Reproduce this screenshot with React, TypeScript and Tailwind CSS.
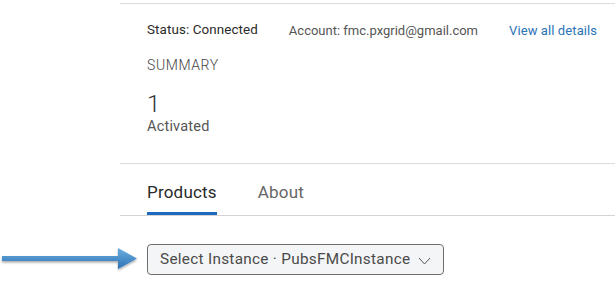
import React from "react";

export default function App() {
  return (
    <div className="relative h-[283px] w-[615px] overflow-hidden bg-white font-['Roboto',sans-serif]">
      {/* pointer arrow */}
      <svg className="absolute left-0 top-[245px]" width="140" height="30" viewBox="0 0 140 30">
        <defs>
          <linearGradient id="ar" x1="0" y1="0" x2="0" y2="1">
            <stop offset="0" stopColor="#6aaee0" />
            <stop offset="1" stopColor="#2f74b5" />
          </linearGradient>
          <filter id="sh" x="-10%" y="-50%" width="120%" height="200%">
            <feDropShadow dx="0" dy="1.5" stdDeviation="1.2" floodColor="#000" floodOpacity="0.35" />
          </filter>
        </defs>
        <g filter="url(#sh)">
          <path d="M2 11 H118 V3 L137 13.5 L118 24 V16 H2 Z" fill="url(#ar)" />
        </g>
      </svg>

      <div className="ml-[120px] mt-[3px] border-t border-[#dcdcdc]">
        <div className="pl-[27px]">
          <div className="flex h-[52px] items-center pt-[1px] text-[13px]">
            <span className="text-[13.4px] tracking-[0.1px] text-[#2a2a2a]">Status: Connected</span>
            <span className="ml-[31px] text-[#555]">Account: fmc.pxgrid@gmail.com</span>
            <span className="ml-[31px] tracking-[0.1px] text-[#2b73b8]">View all details</span>
          </div>
          <div className="text-[14px] font-light leading-[18px] tracking-[0.6px] text-[#444]">SUMMARY</div>
          <div className="mt-[17px] text-[24px] font-light leading-[26px] text-[#333]">1</div>
          <div className="mt-[1px] text-[14.5px] leading-[18px] tracking-[0.2px] text-[#555]">Activated</div>
        </div>

        <div className="mt-[27px] border-t border-[#dcdcdc]">
          <div className="flex items-end border-b border-[#d4d4d4] pl-[27px] pt-[18px]">
            <div className="border-b-[3px] border-[#1d69c0] pb-[10px] text-[17px] leading-[20px] tracking-[0.2px] text-[#2a2a2a]">Products</div>
            <div className="ml-[41px] pb-[13px] text-[17px] leading-[20px] tracking-[0.2px] text-[#666]">About</div>
          </div>
          <div className="pl-[27px] pt-[28px]">
            <button className="flex h-[31px] w-[297px] items-center rounded-[4px] border border-[#6e6e6e] bg-[#f4f5f6] pl-[12px] text-[15.3px] tracking-[0.3px] text-[#4a4a4a]">
              <span>Select Instance · PubsFMCInstance</span>
              <svg className="ml-[8px] mt-[3px]" width="13" height="8" viewBox="0 0 13 8" fill="none">
                <path d="M1 1 L6.5 7 L12 1" stroke="#555" strokeWidth="1" />
              </svg>
            </button>
          </div>
        </div>
      </div>
    </div>
  );
}
